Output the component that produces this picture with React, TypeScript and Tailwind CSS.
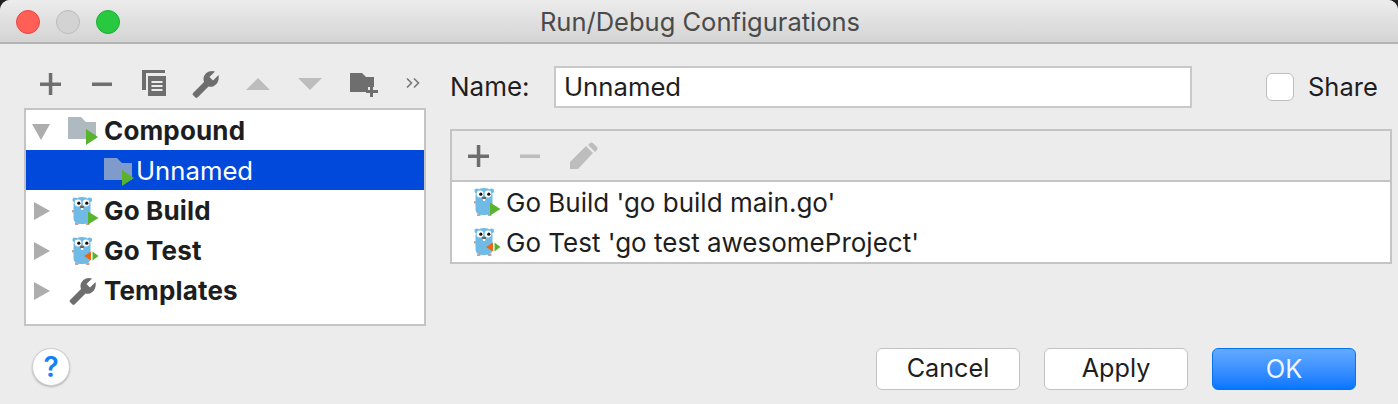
import type { ReactNode } from 'react';

const font = { fontFamily: 'Inter, "Noto Sans", sans-serif' };

function Plus({ color = '#6e6e6e' }: { color?: string }) {
  return (
    <svg width="21" height="22" viewBox="0 0 21 22">
      <path d="M0 9.500h21v3.500H0zM8.800 0h3.500v22H8.800z" fill={color} />
    </svg>
  );
}

function Minus({ color = '#6e6e6e' }: { color?: string }) {
  return (
    <svg width="20" height="22" viewBox="0 0 20 22">
      <path d="M0 9.500h20v3.500H0z" fill={color} />
    </svg>
  );
}

function Copy() {
  return (
    <svg width="24" height="26" viewBox="0 0 24 26" className="-mt-[2px]">
      <path d="M0 0h23v3H4v17H0z" fill="#6e6e6e" />
      <path d="M6 6h18v20H6z" fill="#6e6e6e" />
      <path d="M9.500 11h11v2h-11zM9.500 15h11v2h-11zM9.500 19h11v2h-11z" fill="#ececec" />
    </svg>
  );
}

function Wrench({ color = '#6e6e6e' }: { color?: string }) {
  return (
    <svg width="28" height="28" viewBox="0 0 28 28">
      <path
        d="M26.500 5 21 10.500 17.500 7 23 1.500C18-.5 12 3 11.500 8.500c-.1 1.500.2 2.500.5 3.500L1 23l-.5 1.500L4 28l1.500-.5 11-11C22 18 28 13 26.500 5z"
        fill={color}
      />
    </svg>
  );
}

function Triangle({ up }: { up?: boolean }) {
  return (
    <svg width="24" height="12" viewBox="0 0 24 12">
      <path d={up ? 'M12 0 24 12H0z' : 'M0 0h24L12 12z'} fill="#bdbdbd" />
    </svg>
  );
}

function FolderPlus() {
  return (
    <svg width="28" height="24" viewBox="0 0 28 24" className="ml-[3px] mt-[2px]">
      <path d="M0 0h12l4 4h8v10h-6v5H0z" fill="#6e6e6e" />
      <path d="M20 12h3v5h5v3h-5v4h-3v-4h-4v-3h4z" fill="#6e6e6e" />
    </svg>
  );
}

function Chevrons() {
  return (
    <svg width="14" height="12" viewBox="0 0 14 12" className="-mt-[2px]">
      <path d="M1 1.500 5.500 6 1 10.500M8 1.500 12.500 6 8 10.500" stroke="#777" strokeWidth="1.600" fill="none" />
    </svg>
  );
}

function FolderRun({ color }: { color: string }) {
  return (
    <svg width="30" height="28" viewBox="0 0 30 28">
      <path d="M0 0h13l5 5h10v17H0z" fill={color} />
      <path d="M18 12l12 8-12 8z" fill="#59b32e" />
    </svg>
  );
}

function Gopher({ test }: { test?: boolean }) {
  return (
    <svg width="27" height="30" viewBox="0 0 27 30">
      <circle cx="2.800" cy="4" r="2.400" fill="#6fbbe6" />
      <circle cx="17.700" cy="4" r="2.400" fill="#6fbbe6" />
      <rect x="0" y="14" width="3" height="2.500" fill="#c9a592" />
      <rect x="3" y="26.500" width="3.500" height="2.500" fill="#c9a592" />
      <rect x="14" y="26.500" width="3.500" height="2.500" fill="#c9a592" />
      <path d="M10 1C4.500 1 1.500 4 1.500 8.500v13.500c0 4 3 6 8.500 6s8.500-2 8.500-6V8.500C18.500 4 15.500 1 10 1z" fill="#6fbbe6" />
      <circle cx="6" cy="7" r="3.400" fill="#fff" />
      <circle cx="14" cy="7" r="3.400" fill="#fff" />
      <circle cx="6.800" cy="7.200" r="1.600" fill="#111" />
      <circle cx="14.800" cy="7.200" r="1.600" fill="#111" />
      <rect x="8" y="9.800" width="4" height="2.200" rx="1" fill="#7a5c48" />
      <rect x="9" y="12" width="2.200" height="2" fill="#fff" />
      {test ? (
        <>
          <path d="M19 15.500v9l-7-4.500z" fill="#ee6611" />
          <rect x="19" y="14" width="1.200" height="12" fill="#fff" />
          <path d="M20.500 15.500l6 4.500-6 4.500z" fill="#59b32e" />
        </>
      ) : (
        <path d="M16 15.500l10.500 6.500L16 28.500z" fill="#59b32e" />
      )}
    </svg>
  );
}

function Arrow({ open }: { open?: boolean }) {
  return (
    <svg width="18" height="18" viewBox="0 0 18 18">
      <path d={open ? 'M0 2h18L9 18z' : 'M2 0l16 9L2 18z'} fill="#adadad" />
    </svg>
  );
}

function TreeRow({ arrow, icon, label, selected }: { arrow?: ReactNode; icon: ReactNode; label: string; selected?: boolean }) {
  if (selected) {
    return (
      <div className="flex h-10 items-center bg-[#0049db] pl-[78px] text-white">
        <span className="flex w-[32px] shrink-0 pt-1">{icon}</span>
        <span className="pt-[2px] text-[25.7px] leading-none">{label}</span>
      </div>
    );
  }
  return (
    <div className="flex h-10 items-center pl-[6px] text-[#1e1e1e]">
      <span className="flex w-[36px] shrink-0 pt-[2px]">{arrow}</span>
      <span className="flex w-[36px] shrink-0 pt-[2px]">{icon}</span>
      <span className="pt-[2px] text-[26px] font-bold leading-none tracking-[0.15px]">{label}</span>
    </div>
  );
}

function DialogButton({ label, primary }: { label: string; primary?: boolean }) {
  if (primary) {
    return (
      <button className="h-[42px] w-36 rounded-[6px] border border-[#0a72ee] bg-gradient-to-b from-[#62aaff] to-[#0276ff] text-[25.5px] leading-none text-[#f0f6ff]">
        {label}
      </button>
    );
  }
  return (
    <button className="h-[42px] w-36 rounded-[6px] border border-[#c2c2c2] bg-white text-[25.2px] leading-none text-[#1e1e1e]">
      {label}
    </button>
  );
}

export default function App() {
  return (
    <div className="h-[404px] w-[1398px] overflow-hidden bg-[#222]" style={font}>
      <div className="flex h-full flex-col rounded-t-[10px] bg-[#ececec]">
        <header className="relative flex h-11 shrink-0 items-center justify-center rounded-t-[10px] border-b-2 border-[#b4b4b4] bg-gradient-to-b from-[#ececec] to-[#d4d4d4]">
          <div className="absolute left-4 top-[10px] flex gap-4">
            <span className="h-6 w-6 rounded-full border border-[#e5483f] bg-[#ff5f57]" />
            <span className="h-6 w-6 rounded-full border border-[#bcbcbc] bg-[#d3d3d3]" />
            <span className="h-6 w-6 rounded-full border border-[#1fae33] bg-[#28c940]" />
          </div>
          <span className="pl-[2px] pt-[2px] text-[25.5px] leading-none text-[#4a4a4a]">Run/Debug Configurations</span>
        </header>

        <div className="flex min-h-0 flex-1 pl-6">
          <div className="w-[402px] shrink-0">
            <div className="flex h-16 items-center pt-4">
              <span className="flex w-[52px] justify-center"><Plus /></span>
              <span className="flex w-[52px] justify-center"><Minus /></span>
              <span className="flex w-[52px] justify-center"><Copy /></span>
              <span className="flex w-[52px] justify-center"><Wrench /></span>
              <span className="flex w-[52px] justify-center"><Triangle up /></span>
              <span className="flex w-[52px] justify-center"><Triangle /></span>
              <span className="flex w-[52px] justify-center"><FolderPlus /></span>
              <span className="flex w-[32px] justify-end"><Chevrons /></span>
            </div>
            <div className="h-[218px] border-2 border-[#c4c4c4] bg-white">
              <TreeRow arrow={<Arrow open />} icon={<FolderRun color="#afb9c0" />} label="Compound" />
              <TreeRow icon={<FolderRun color="#7f9bcb" />} label="Unnamed" selected />
              <TreeRow arrow={<Arrow />} icon={<span className="pl-1"><Gopher /></span>} label="Go Build" />
              <TreeRow arrow={<Arrow />} icon={<span className="pl-1"><Gopher test /></span>} label="Go Test" />
              <TreeRow arrow={<Arrow />} icon={<span className="pl-[1px]"><Wrench /></span>} label="Templates" />
            </div>
          </div>

          <div className="ml-6 flex-1 pr-[6px]">
            <div className="mt-[22px] flex h-[42px] items-center text-[#1e1e1e]">
              <span className="w-[104px] text-[26px] leading-none">Name:</span>
              <div className="flex h-full w-[638px] items-center border-2 border-[#c9c9c9] bg-white pl-2 text-[25.7px] leading-none">
                Unnamed
              </div>
              <span className="ml-[74px] h-7 w-7 rounded-[6px] border border-[#bdbdbd] bg-white" />
              <span className="ml-[14px] text-[25.5px] leading-none">Share</span>
            </div>

            <div className="mt-[21px] border-2 border-[#c4c4c4]">
              <div className="flex h-[51px] items-center border-b-2 border-[#c4c4c4] pl-4">
                <span className="flex w-[52px]"><Plus /></span>
                <span className="flex w-[50px]"><Minus color="#bdbdbd" /></span>
                <svg width="28" height="28" viewBox="0 0 28 28">
                  <path d="M0 20 16 4l7 7L8 27H0z" fill="#bdbdbd" />
                  <path d="M19 2c2-2 3-2 5 0l2 2c2 2 2 3 0 5l-1 1-7-7z" fill="#bdbdbd" />
                </svg>
              </div>
              <div className="bg-white">
                <div className="flex h-10 items-center pl-[22px] text-[26px] leading-none text-[#1e1e1e]">
                  <span className="flex w-[32px] shrink-0"><Gopher /></span>
                  <span className="pt-[2px]">Go Build 'go build main.go'</span>
                </div>
                <div className="flex h-10 items-center pl-[22px] text-[26px] leading-none text-[#1e1e1e]">
                  <span className="flex w-[32px] shrink-0"><Gopher test /></span>
                  <span className="pt-[2px]">Go Test 'go test awesomeProject'</span>
                </div>
              </div>
            </div>
          </div>
        </div>

        <footer className="flex h-[56px] shrink-0 items-start pl-8 pr-[42px]">
          <button className="flex h-[38px] w-[38px] items-center justify-center rounded-full border border-[#cfcfcf] bg-white text-[28px] font-semibold leading-none text-[#1a7ff5] shadow-[0_1px_2px_rgba(0,0,0,0.25)]">
            ?
          </button>
          <div className="ml-auto flex gap-6">
            <DialogButton label="Cancel" />
            <DialogButton label="Apply" />
            <DialogButton label="OK" primary />
          </div>
        </footer>
      </div>
    </div>
  );
}
